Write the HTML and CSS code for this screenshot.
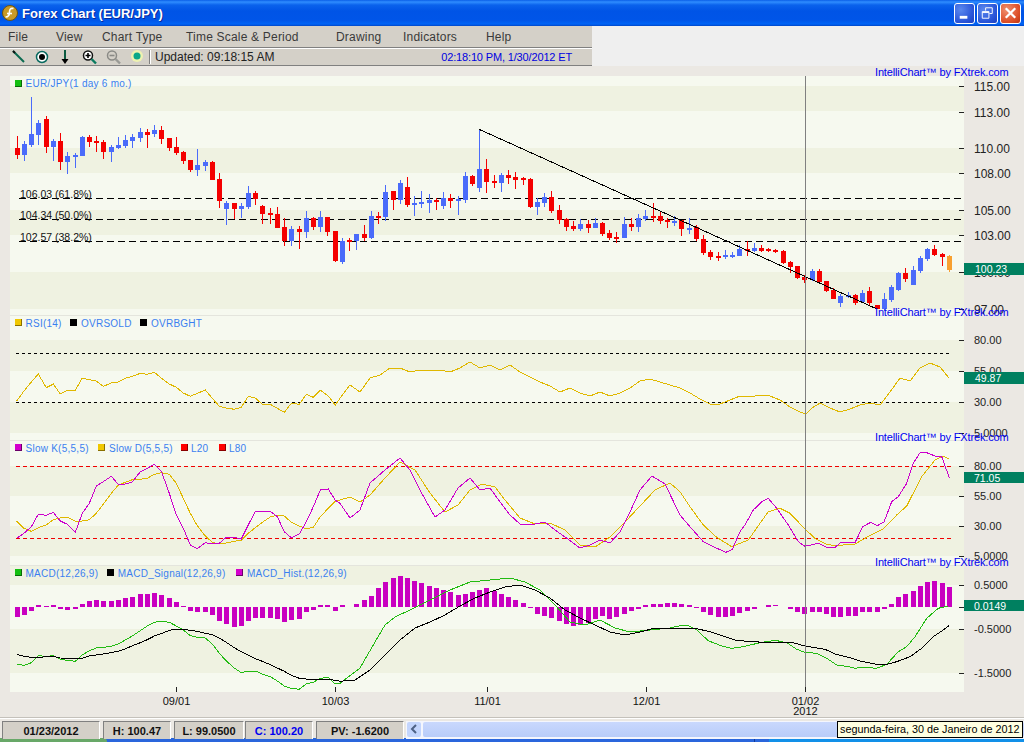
FILE: index.html
```html
<!DOCTYPE html>
<html lang="en">
<head>
<meta charset="utf-8">
<title>Forex Chart (EUR/JPY)</title>
<link rel="stylesheet" href="styles.css">
</head>
<body>
<div class="window">
  <header class="titlebar">
    <svg class="app-icon" width="18" height="18" viewBox="0 0 18 18">
      <circle class="app-icon-disc" cx="9" cy="9" r="7.5"/>
      <path class="app-icon-s" d="M12.5 4.5C9.500 3.800 8.500 5.500 8.500 8S7.500 13 4.500 13"/>
      <path class="app-icon-s" d="M6 9.500H11"/>
    </svg>
    <span class="title">Forex Chart (EUR/JPY)</span>
    <div class="win-buttons">
      <button class="win-btn"><svg width="20" height="20" viewBox="0 0 20 20"><rect class="glyph-fill" x="5" y="13" width="8" height="3"/></svg></button>
      <button class="win-btn"><svg width="20" height="20" viewBox="0 0 20 20"><path class="glyph-line" d="M8 7.500V4.500H15V10.500H12M4.500 8.500H11.500V15.500H4.500ZM4.500 9.500H11.500"/></svg></button>
      <button class="win-btn win-close"><svg width="20" height="20" viewBox="0 0 20 20"><path class="glyph-x" d="M5 5L15 15M15 5L5 15"/></svg></button>
    </div>
  </header>

  <div class="topstrip">
    <div class="bars">
      <nav class="menubar">
        <span class="menu m-file">File</span>
        <span class="menu m-view">View</span>
        <span class="menu m-type">Chart Type</span>
        <span class="menu m-time">Time Scale &amp; Period</span>
        <span class="menu m-draw">Drawing</span>
        <span class="menu m-ind">Indicators</span>
        <span class="menu">Help</span>
      </nav>
      <div class="toolbar">
        <svg class="tools" width="146" height="16" viewBox="0 0 146 16">
          <path class="t-pencil" d="M2 2L13 13"/><path class="t-pencil-tip" d="M2 2L4 4"/>
          <circle class="t-ring" cx="31" cy="8" r="5.500"/><circle class="t-dot" cx="31" cy="8" r="3"/>
          <path class="t-arrow" d="M54 1V11"/><path class="t-head" d="M50.500 10H57.500L54 15Z"/>
          <circle class="t-lens" cx="77" cy="6.500" r="4.500"/><path class="t-plus" d="M74.500 6.500H79.500M77 4V9"/><path class="t-handle" d="M80.500 10L85 14.500"/>
          <circle class="t-lens-off" cx="101" cy="6.500" r="4.500"/><path class="t-minus-off" d="M98.500 6.500H103.500"/><path class="t-handle-off" d="M104.500 10L109 14.500"/>
          <circle class="t-halo" cx="126" cy="7" r="6"/><circle class="t-led" cx="126" cy="7" r="3.500"/>
        </svg>
        <span class="tool-sep"></span>
        <span class="updated">Updated: 09:18:15 AM</span>
        <span class="clock">02:18:10 PM, 1/30/2012 ET</span>
      </div>
    </div>
  </div>

  <div class="chart-area">
    <svg class="chart" width="1024" height="651" viewBox="0 66 1024 651">
      <rect class="band-l" x="10" y="76" width="954" height="616"/>
      <rect class="band-d" x="10" y="86" width="954" height="25"/>
      <rect class="band-d" x="10" y="148" width="954" height="25"/>
      <rect class="band-d" x="10" y="210" width="954" height="25"/>
      <rect class="band-d" x="10" y="272" width="954" height="37"/>
      <rect class="band-d" x="10" y="340" width="954" height="31"/>
      <rect class="band-d" x="10" y="402" width="954" height="31"/>
      <rect class="band-d" x="10" y="466" width="954" height="30"/>
      <rect class="band-d" x="10" y="526" width="954" height="30"/>
      <rect class="band-d" x="10" y="565" width="954" height="20"/>
      <rect class="band-d" x="10" y="629" width="954" height="44"/>
      <rect class="pane-sep" x="10" y="315" width="954" height="1"/>
      <rect class="pane-sep" x="10" y="440" width="954" height="1"/>
      <rect class="pane-sep" x="10" y="565" width="954" height="1"/>

      <path class="dash-main" d="M19 198.500H964M19 219.500H964M19 241.500H964"/>
      <path class="dash-rsi" d="M16 353.500H952M16 402.500H952"/>
      <path class="dash-red" d="M16 466.500H952M16 538.500H952"/>

      <text class="fib" x="20" y="198">106.03 (61.8%)</text>
      <text class="fib" x="20" y="219">104.34 (50.0%)</text>
      <text class="fib" x="20" y="241">102.57 (38.2%)</text>

      <g class="plots"></g>

      <path class="trend" d="M479.500 129.500L877 309"/>
      <path class="cursor" d="M805.500 76V692"/>

      <path class="ticks" d="M959 86.500H964M959 112.500H964M959 148.500H964M959 173.500H964M959 210.500H964M959 235.500H964M959 272.500H964M959 309.500H964M959 340.500H964M959 371.500H964M959 402.500H964M959 433.500H964M959 466.500H964M959 496.500H964M959 526.500H964M959 556.500H964M959 585.500H964M959 607.500H964M959 629.500H964M959 673.500H964M176.500 687V692M335.500 687V692M487.500 687V692M646.500 687V692M805.500 687V692"/>

      <g class="axis">
        <text x="974" y="91">115.00</text>
        <text x="974" y="117">113.00</text>
        <text x="974" y="153">110.00</text>
        <text x="974" y="178">108.00</text>
        <text x="974" y="215">105.00</text>
        <text x="974" y="240">103.00</text>
        <text x="974" y="277">100.00</text>
        <text x="974" y="314">97.00</text>
      </g>
      <g class="axis axis-small">
        <text x="974" y="344">80.00</text>
        <text x="974" y="375">55.00</text>
        <text x="974" y="406">30.00</text>
        <text x="974" y="437">5.0000</text>
        <text x="974" y="470">80.00</text>
        <text x="974" y="500">55.00</text>
        <text x="974" y="530">30.00</text>
        <text x="974" y="560">5.0000</text>
        <text x="974" y="589">0.5000</text>
        <text x="974" y="633">-0.5000</text>
        <text x="974" y="677">-1.5000</text>
      </g>
      <g class="xaxis">
        <text x="176.500" y="705">09/01</text>
        <text x="335.500" y="705">10/03</text>
        <text x="487.500" y="705">11/01</text>
        <text x="646.500" y="705">12/01</text>
        <text x="805.500" y="705">01/02</text>
        <text x="805.500" y="715">2012</text>
      </g>

      <g class="brand">
        <text x="875" y="76">IntelliChart™ by FXtrek.com</text>
        <text x="875" y="316">IntelliChart™ by FXtrek.com</text>
        <text x="875" y="441">IntelliChart™ by FXtrek.com</text>
        <text x="875" y="566">IntelliChart™ by FXtrek.com</text>
      </g>

      <rect class="badge" x="964" y="263" width="60" height="12"/>
      <rect class="badge" x="964" y="372" width="60" height="12"/>
      <rect class="badge" x="964" y="472" width="60" height="11"/>
      <rect class="badge" x="964" y="600" width="60" height="11"/>
      <text class="badge-text" x="975" y="273">100.23</text>
      <text class="badge-text" x="975" y="382">49.87</text>
      <text class="badge-text" x="974" y="482">71.05</text>
      <text class="badge-text" x="974" y="610">0.0149</text>

      <g class="legend">
        <rect class="sw-edge sw-green-e" x="15" y="80" width="7" height="7"/><rect class="sw-green" x="15" y="80" width="6" height="6"/>
        <text x="25.500" y="87">EUR/JPY(1 day 6 mo.)</text>
        <rect class="sw-edge sw-gold-e" x="15" y="319" width="7" height="7"/><rect class="sw-gold" x="15" y="319" width="6" height="6"/>
        <text x="25.500" y="326.500">RSI(14)</text>
        <rect class="sw-black" x="70" y="319" width="7" height="7"/>
        <text x="81" y="326.500">OVRSOLD</text>
        <rect class="sw-black" x="140" y="319" width="7" height="7"/>
        <text x="151" y="326.500">OVRBGHT</text>
        <rect class="sw-edge sw-pur-e" x="15" y="444" width="7" height="7"/><rect class="sw-pur" x="15" y="444" width="6" height="6"/>
        <text x="25.500" y="451.500">Slow K(5,5,5)</text>
        <rect class="sw-edge sw-gold-e" x="98" y="444" width="7" height="7"/><rect class="sw-gold" x="98" y="444" width="6" height="6"/>
        <text x="109" y="451.500">Slow D(5,5,5)</text>
        <rect class="sw-edge sw-red-e" x="181" y="444" width="7" height="7"/><rect class="sw-red" x="181" y="444" width="6" height="6"/>
        <text x="191" y="451.500">L20</text>
        <rect class="sw-edge sw-red-e" x="219" y="444" width="7" height="7"/><rect class="sw-red" x="219" y="444" width="6" height="6"/>
        <text x="229" y="451.500">L80</text>
        <rect class="sw-edge sw-green-e" x="15" y="569" width="7" height="7"/><rect class="sw-green" x="15" y="569" width="6" height="6"/>
        <text x="25.500" y="576.500">MACD(12,26,9)</text>
        <rect class="sw-black" x="107" y="569" width="7" height="7"/>
        <text x="117.700" y="576.500">MACD_Signal(12,26,9)</text>
        <rect class="sw-edge sw-pur-e" x="236" y="569" width="7" height="7"/><rect class="sw-pur" x="236" y="569" width="6" height="6"/>
        <text x="247" y="576.500">MACD_Hist.(12,26,9)</text>
      </g>
    </svg>
  </div>

  <footer class="statusbar">
    <div class="cell c-date">01/23/2012</div>
    <div class="cell c-high">H: 100.47</div>
    <div class="cell c-low">L: 99.0500</div>
    <div class="cell c-close">C: 100.20</div>
    <div class="cell c-pv">PV: -1.6200</div>
    <div class="scroller">
      <span class="scroll-btn"><svg width="14" height="14" viewBox="0 0 14 14"><path class="chevron" d="M9 3L5 7L9 11"/></svg></span>
      <span class="scroll-thumb"></span>
    </div>
    <div class="tooltip">segunda-feira, 30 de Janeiro de 2012</div>
  </footer>

  <div class="taskbar">
    <span class="start"></span>
    <span class="tasks"></span>
    <span class="tray"></span>
  </div>
</div>
<script src="chart.js"></script>
</body>
</html>
```

FILE: styles.css
```css
* { box-sizing: border-box; }
html, body { margin: 0; padding: 0; height: 100%; overflow: hidden; }
body { font-family: "Liberation Sans", Arial, sans-serif; background: #ebe8e3; }
.window { width: 1024px; height: 742px; display: flex; flex-direction: column; overflow: hidden; }

.titlebar {
  height: 26px; flex: none; display: flex; align-items: center; padding: 0 3px 0 1px;
  background: linear-gradient(#0a5fe8 0, #2f8dff 2px, #0a62ec 5px, #0054e6 11px, #0055e8 20px, #0064f6 24px, #0047c8 26px);
}
.app-icon { flex: none; }
.app-icon-disc { fill: #c99a26; stroke: #6b5312; stroke-width: 1; }
.app-icon-s { fill: none; stroke: #fff; stroke-width: 1.6; }
.title { margin-left: 3px; color: #fff; font-weight: 700; font-size: 13px; text-shadow: 1px 1px 0 #0a2a9a; }
.win-buttons { margin-left: auto; display: flex; gap: 2px; }
.win-btn {
  width: 21px; height: 21px; padding: 0; border: 1px solid #fff; border-radius: 3px; display: flex; align-items: center; justify-content: center;
  background: radial-gradient(circle at 30% 30%, #5a88ee, #2a55d8 65%, #1c3fc0);
}
.win-close { background: radial-gradient(circle at 30% 30%, #f09070, #dd4f28 65%, #bb3311); }
.glyph-fill { fill: #fff; }
.glyph-line { fill: none; stroke: #fff; stroke-width: 1; }
.glyph-x { fill: none; stroke: #fff; stroke-width: 2.4; }

.topstrip { height: 40px; flex: none; background: #efefef; }
.bars { width: 592px; background: #d4d0c8; height: 40px; }
.menubar { height: 22px; display: flex; align-items: center; padding-left: 8px; border-bottom: 1px solid #808080; font-size: 12px; letter-spacing: 0.2px; color: #3a3a3a; }
.menu { display: block; }
.m-file { width: 48px; }
.m-view { width: 46px; }
.m-type { width: 84px; }
.m-time { width: 150px; }
.m-draw { width: 67px; }
.m-ind { width: 83px; }
.toolbar { height: 18px; display: flex; align-items: center; border-top: 1px solid #fff; border-bottom: 1px solid #808080; box-shadow: 0 1px 0 #fff; font-size: 12px; color: #222; padding-left: 11px; }
.tools { flex: none; margin-right: -8px; }
.tool-sep { flex: none; width: 2px; height: 14px; border-left: 1px solid #808080; border-right: 1px solid #fff; }
.updated { margin-left: 4px; }
.clock { margin-left: auto; margin-right: 20px; font-size: 11px; letter-spacing: -0.15px; color: #0000e0; }

.t-pencil { stroke: #0a6a50; stroke-width: 2; fill: none; }
.t-pencil-tip { stroke: #111; stroke-width: 2; fill: none; }
.t-ring { fill: #fff; stroke: #0a6a60; stroke-width: 1.5; }
.t-dot { fill: #000; }
.t-arrow { stroke: #0a5a40; stroke-width: 2; fill: none; }
.t-head { fill: #000; }
.t-lens { fill: #fff; stroke: #111; stroke-width: 1.5; }
.t-plus { stroke: #000; stroke-width: 1.6; fill: none; }
.t-handle { stroke: #0a7a60; stroke-width: 2.4; fill: none; }
.t-lens-off { fill: none; stroke: #8a8a86; stroke-width: 1.5; }
.t-minus-off { stroke: #8a8a86; stroke-width: 1.6; fill: none; }
.t-handle-off { stroke: #9a9a96; stroke-width: 2.4; fill: none; }
.t-halo { fill: #eef2b0; }
.t-led { fill: #0aa888; }

.chart-area { flex: none; height: 651px; background: #ebe8e3; }
.chart { display: block; }
.band-l { fill: #f6f9ef; }
.band-d { fill: #eff2e1; }
.pane-sep { fill: #e4e5dd; }
.dash-main { stroke: #000; fill: none; stroke-dasharray: 7 4; shape-rendering: crispEdges; }
.dash-rsi { stroke: #000; fill: none; stroke-dasharray: 3 3; shape-rendering: crispEdges; }
.dash-red { stroke: #f00000; fill: none; stroke-dasharray: 4 3; shape-rendering: crispEdges; }
.fib { font-size: 10.5px; fill: #111; }
.trend { stroke: #000; fill: none; shape-rendering: crispEdges; }
.cursor { stroke: #808080; fill: none; shape-rendering: crispEdges; }
.ticks { stroke: #222; fill: none; shape-rendering: crispEdges; }
.axis text { font-size: 12px; fill: #222; }
.axis-small text { font-size: 11px; }
.xaxis text { font-size: 11px; fill: #111; text-anchor: middle; }
.brand text { font-size: 11px; fill: #0000f0; letter-spacing: -0.15px; }
.badge { fill: #008060; }
.badge-text { font-size: 10.5px; fill: #fff; }
.legend text { font-size: 10px; fill: #3a7ff0; letter-spacing: 0.25px; }
.sw-green { fill: #14c010; } .sw-green-e { fill: #0a6a08; }
.sw-gold { fill: #f0c800; } .sw-gold-e { fill: #8a7000; }
.sw-pur { fill: #d400cc; } .sw-pur-e { fill: #6a0068; }
.sw-red { fill: #ff0000; } .sw-red-e { fill: #8a0000; }
.sw-black { fill: #000; }

.wick-r, .wick-b, .wick-o { fill: none; stroke-width: 1; shape-rendering: crispEdges; }
.body-r, .body-b, .body-o { fill: none; stroke-width: 5; shape-rendering: crispEdges; }
.wick-r, .body-r { stroke: #f40000; }
.wick-b, .body-b { stroke: #4a6bfa; }
.wick-o, .body-o { stroke: #f8a030; }
.hist { fill: none; stroke: #c800c0; stroke-width: 5; shape-rendering: crispEdges; }
.line { fill: none; stroke-width: 1; shape-rendering: crispEdges; }
.l-rsi, .l-d { stroke: #e0b800; }
.l-k { stroke: #cc00cc; }
.l-macd { stroke: #22bb11; }
.l-signal { stroke: #000; }

.statusbar { position: relative; flex: none; height: 21px; display: flex; padding: 3px 0 0 2px; background: #ebe8e3; border-top: 1px solid #c4c1bb; box-shadow: inset 0 1px 0 #fff; }
.cell {
  height: 18px; display: flex; align-items: center; justify-content: center; margin-right: 3px;
  background: #d4d0c8; border-top: 1px solid #808080; border-left: 1px solid #808080; border-right: 1px solid #fff;
  font-size: 11px; font-weight: 700; color: #111;
}
.c-date { width: 98px; }
.c-high { width: 68px; }
.c-low { width: 70px; margin-right: 1px; }
.c-close { width: 68px; color: #0000f0; }
.c-pv { width: 88px; margin-right: 2px; }
.scroller { flex: 1; height: 18px; display: flex; padding: 1px 0 0 1px; background: #f4f6fd; gap: 2px; }
.scroll-btn { width: 14px; height: 15px; background: #c3d5fd; border-radius: 2px; display: flex; }
.chevron { fill: none; stroke: #4d6185; stroke-width: 2; }
.scroll-thumb { flex: 1; height: 15px; background: linear-gradient(#c9d8fd, #b8ccf9); border-radius: 2px; }
.tooltip { position: absolute; left: 837px; top: 3px; width: 186px; height: 17px; padding-left: 2px; background: #ffffe1; border: 1px solid #000; font-size: 10.8px; line-height: 15px; color: #000; white-space: nowrap; overflow: hidden; }

.taskbar { flex: 1; display: flex; background: #2a66dc; }
.start { width: 107px; background: #68a868; border-radius: 0 4px 0 0; }
.tasks { width: 648px; background: #2a66dc; border-right: 1px solid #123a9a; }
.tray { flex: 1; margin-left: 14px; background: #1290e8; }
```

FILE: chart.js
```js
(function () {
  var NS = "http://www.w3.org/2000/svg";
  var plots = document.querySelector(".plots");

  function add(d, cls) {
    var p = document.createElementNS(NS, "path");
    p.setAttribute("d", d);
    p.setAttribute("class", cls);
    plots.appendChild(p);
  }
  function colX(i) { return Math.floor(17.3 + 7.225 * i) + 0.5; }

  // candles as "colour high top bottom low", in 3x units over a base y
  function row(base, s) {
    return s.split(",").map(function (r) {
      var p = r.trim().split(" ");
      return { c: p[0], h: base + p[1] / 3, t: base + p[2] / 3, b: base + p[3] / 3, l: base + p[4] / 3 };
    });
  }
  var candles = [].concat(
    row(90, "r 138 174 194 207,b 153 162 195 212,b 21 132 165 171,b 90 99 135 165,r 78 87 171 189,b 147 153 171 213,r 129 153 216 240,b 186 198 216 252,b 189 195 201 234,b 138 141 198 198,r 135 141 156 171,r 138 153 159 186,r 150 156 186 207,b 165 171 186 216,b 141 165 174 177,b 135 150 168 174,b 132 141 153 174,b 114 126 144 156,r 117 126 135 174,b 105 120 132 141,r 108 120 147 162,r 144 144 174 183,r 141 171 189 195,r 183 186 213 222,r 210 210 240 246,b 177 225 240 258,b 210 216 228 243,r 213 216 270 270,r 249 267 333 354,b 333 339 357 405,r 339 339 357 387,b 339 348 357 384,b 288 309 351 357,r 303 309 327 345,r 345 348 372 402,r 354 369 375 402,r 351 372 414 414,r 384 411 453 468,b 408 417 453 468,r 408 417 426 477,b 363 384 426 444,r 381 384 411 420,b 363 381 411 426,r 381 381 426 438,r 423 423 513 516"),
    row(120, "b 354 363 426 432,r 354 361 364 393,b 342 342 363 390,r 315 342 354 363,b 273 288 354 357,r 276 288 291 312,b 195 216 291 303,r 213 213 240 270,b 180 189 240 252,r 171 201 255 261,b 228 249 255 288,b 213 246 252 264,b 222 240 249 279,r 234 240 246 270,b 216 234 258 267,r 222 234 243 264,b 228 237 243 285,b 156 168 240 249,r 165 168 192 198,b 28 147 204 216,r 117 147 186 219,r 165 183 189 204,b 159 165 189 216,r 150 165 174 192,r 156 171 180 207,r 171 175 180 195,r 174 177 261 264,b 234 246 261 285,b 219 231 249 261,r 213 231 273 279,r 255 270 300 312,r 294 297 321 333,r 303 318 327 333,b 297 312 327 333,r 300 312 324 339,b 294 309 324 324,r 306 309 342 348,r 330 339 354 360,r 336 350 352 369,b 291 312 354 354,r 294 312 321 333,b 282 294 321 336,b 270 288 297 303,r 249 288 290 306,r 273 288 303 312,r 294 300 306 324,b 288 303 305 318"),
    row(210, "r 30 30 57 78,b 24 54 56 72,r 45 51 87 93,r 75 87 129 135,r 120 126 141 150,r 126 138 141 153,b 120 135 141 147,b 126 135 138 144,b 105 117 138 138,r 93 117 123 138,b 99 114 123 126,r 105 114 123 126,r 114 118 120 126,r 117 120 126 129,r 120 123 159 162,r 153 156 171 189,r 168 168 204 207,r 195 201 210 219,b 177 183 210 213,r 177 183 216 219,r 213 213 243 246,r 234 240 267 267,b 252 258 279 291,b 246 255 261 264,r 252 255 279 285,b 240 249 276 279,r 231 243 279 285,r 285 285 297 297,b 249 267 297 300,b 225 231 270 276,b 186 189 240 243,r 174 189 207 216,b 168 180 225 225,b 138 144 183 189,b 114 117 147 153,r 105 117 135 138,r 129 132 141 168,o 135 138 180 186")
  );

  var wick = { r: "", b: "", o: "" };
  var body = { r: "", b: "", o: "" };
  candles.forEach(function (k, i) {
    var x = colX(i);
    var top = Math.round(k.t);
    var bot = Math.max(Math.round(k.b), top + 2);
    wick[k.c] += "M" + x + " " + Math.round(k.h) + "V" + Math.round(k.l);
    body[k.c] += "M" + x + " " + top + "V" + bot;
  });
  ["b", "r", "o"].forEach(function (c) {
    add(wick[c], "wick-" + c);
    add(body[c], "body-" + c);
  });

  // MACD histogram: [top, bottom]
  function pairs(base, list) {
    return list.map(function (p) { return [base + p[0] / 3, base + p[1] / 3]; });
  }
  var hist = [].concat(
    pairs(560, [[141,171],[141,165],[141,153],[135,141],[138,141],[135,141],[141,147],[141,150],[141,147],[132,141],[123,141],[120,141],[123,141],[123,141],[120,141],[114,141],[111,141],[102,141],[102,141],[99,141],[105,141],[114,141],[126,141],[138,141],[141,153],[141,156],[141,156],[141,165],[141,183],[141,192],[141,201],[141,198],[141,183],[141,174],[141,174],[141,174],[141,177],[141,186],[141,180],[141,177],[141,156],[141,150],[135,141],[135,141],[141,153]]),
    pairs(0, [[1815,1821],[1821,1821],[1812,1821],[1800,1821],[1788,1821],[1764,1821],[1746,1821],[1734,1821],[1728,1821],[1734,1821],[1743,1821],[1749,1821],[1758,1821],[1764,1821],[1770,1821],[1776,1821],[1785,1821],[1782,1821],[1776,1821],[1770,1821],[1764,1821],[1773,1821],[1782,1821],[1791,1821],[1800,1821],[1809,1821],[1821,1824],[1821,1842],[1821,1848],[1821,1854],[1821,1863],[1821,1872],[1821,1878],[1821,1875],[1821,1869],[1821,1857],[1821,1848],[1821,1857],[1821,1851],[1821,1842],[1821,1833],[1821,1827],[1815,1821],[1812,1821],[1812,1821],[1809,1821],[1809,1821]]),
    pairs(430, [[522,531],[526,531],[531,534],[531,546],[531,555],[531,561],[531,561],[531,558],[531,549],[531,543],[531,537],[531,531],[526,530],[525,529],[531,531],[531,537],[531,546],[531,552],[531,546],[531,546],[531,552],[531,561],[531,561],[531,558],[531,558],[531,546],[531,546],[531,546],[531,537],[522,531],[501,531],[492,531],[483,531],[468,531],[456,531],[453,531],[459,531],[471,531]])
  );
  var h = "";
  hist.forEach(function (p, i) {
    if (p[1] - p[0] < 0.5) return;
    h += "M" + colX(i) + " " + Math.round(p[0]) + "V" + Math.round(p[1]);
  });
  add(h, "hist");

  // polylines: segments in 3x zoom units with an origin, or plain pixels
  function z(ox, oy, pts) {
    return pts.map(function (p) { return [ox + p[0] / 3, oy + p[1] / 3]; });
  }
  function line(pts, cls) {
    add("M" + pts.map(function (p) { return p[0].toFixed(1) + " " + p[1].toFixed(1); }).join("L"), "line " + cls);
  }

  line([].concat(
    z(0, 310, [[50,273],[72,243],[94,216],[115,192],[139,233],[160,222],[181,252],[202,241],[226,241],[247,204],[268,209],[289,213],[310,229],[334,219],[355,216],[376,205],[397,199],[421,190],[442,193],[463,187],[484,204],[508,222],[529,232],[550,249],[571,259],[592,250],[616,240],[637,265],[658,289],[679,294],[703,298],[724,292],[745,259],[766,264],[787,283],[811,283],[832,295],[853,307],[874,280],[898,283],[919,253],[940,262],[961,240],[985,258],[1006,285],[1020,265]]),
    [[350,385],[360,392],[370,378],[380,375],[390,368],[400,368],[410,372],[420,370],[430,371],[440,370],[450,372],[460,368],[470,362],[480,368],[490,365],[500,370],[510,365],[520,372],[530,377],[540,382],[550,386],[560,392],[570,388],[580,393],[590,396],[600,392],[610,396],[620,393],[630,388],[640,381],[650,379],[660,382],[670,385],[680,388],[690,393],[700,399],[710,404],[720,404],[730,400],[740,396],[750,397],[760,395],[770,396],[780,400],[790,407],[800,412],[806,414],[812,408],[820,403],[830,408],[840,412],[850,409],[860,405],[870,403],[880,405],[890,392],[900,378],[910,381],[920,368],[930,363],[940,367],[949,378]]
  ), "l-rsi");

  line([].concat(
    z(0, 435, [[50,258],[72,280],[94,289],[115,278],[139,270],[160,254],[181,249],[202,246],[226,259],[247,258],[268,254],[289,235],[310,207],[334,175],[355,150],[376,142],[397,134],[421,133],[442,130],[463,118],[484,113],[508,118],[529,145],[550,190],[571,235],[592,272],[616,303],[637,322],[658,327],[679,324],[703,319],[724,316],[745,295],[766,278],[787,262],[811,246],[832,240],[853,243],[874,262],[898,273],[919,282],[940,277],[961,245],[985,220],[1006,198],[1020,195]]),
    [[350,497],[360,502],[370,495],[385,478],[400,462],[415,470],[430,493],[445,512],[458,505],[470,490],[482,484],[495,487],[505,500],[520,518],[535,524],[550,523],[565,530],[580,545],[595,547],[610,537],[625,522],[640,506],[655,490],[670,483]],
    z(680, 430, [[0,185],[30,230],[70,285],[110,322],[155,350],[205,330],[240,280],[265,245],[300,235],[330,250],[375,297],[405,325],[440,343],[465,347],[525,342],[560,322],[612,295],[650,255],[680,228],[725,140],[765,90],[790,78],[808,88]])
  ), "l-d");

  line([].concat(
    z(0, 435, [[50,310],[72,295],[94,275],[115,238],[139,241],[160,232],[181,258],[202,268],[226,292],[247,235],[268,205],[289,153],[310,140],[334,124],[355,148],[376,147],[397,141],[421,110],[442,100],[463,88],[484,108],[508,175],[529,240],[550,280],[571,330],[592,341],[616,323],[637,327],[658,325],[679,307],[703,307],[724,312],[745,270],[766,229],[787,229],[811,229],[832,245],[853,290],[874,308],[898,297],[919,260],[940,215],[961,165],[985,162],[1006,196],[1020,205]]),
    [[350,518],[360,510],[370,483],[385,470],[400,458],[410,470],[420,490],[435,517],[445,510],[458,488],[470,478],[480,490],[490,488],[500,502],[510,515],[520,524],[530,525],[545,522],[555,530],[565,537],[580,548],[590,545],[600,540],[610,543],[620,532],[630,512],[640,490],[652,476],[665,484]],
    z(680, 430, [[0,255],[30,290],[70,335],[100,350],[138,367],[157,358],[180,305],[195,285],[220,240],[245,215],[265,205],[290,235],[325,285],[355,335],[375,349],[415,340],[440,352],[465,352],[482,338],[525,338],[548,290],[572,277],[592,287],[612,276],[635,215],[655,200],[680,160],[700,100],[720,68],[740,68],[765,78],[785,80],[808,143]])
  ), "l-k");

  line([].concat(
    z(0, 560, [[50,313],[72,316],[94,308],[115,287],[139,289],[160,287],[181,298],[202,301],[226,304],[247,285],[268,272],[289,264],[310,262],[334,259],[355,252],[376,240],[397,228],[421,212],[442,198],[463,187],[484,184],[508,187],[529,198],[550,210],[571,227],[592,232],[616,234],[637,252],[658,280],[679,303],[703,324],[724,338],[745,333],[766,333],[787,342],[811,350],[832,363],[853,378],[874,385],[898,388],[919,372],[940,367],[961,355],[985,352],[1006,372],[1020,370]]),
    [[360,668],[375,642],[385,625],[395,617],[410,610],[430,600],[450,590],[470,582],[490,580],[510,578],[525,582],[540,590],[555,605],[570,622],[585,625],[600,620],[615,628],[630,632],[650,630],[670,628]],
    z(680, 430, [[0,587],[25,587],[50,600],[85,632],[125,648],[155,655],[190,650],[240,638],[285,631],[320,638],[350,658],[375,667],[410,670],[440,685],[470,705],[500,709],[525,715],[550,712],[590,715],[620,703],[655,665],[680,650],[705,620],[740,565],[775,535],[805,528]])
  ), "l-macd");

  line([].concat(
    z(0, 560, [[50,283],[72,289],[94,292],[115,292],[160,289],[181,294],[202,295],[247,295],[268,288],[310,282],[355,274],[376,267],[397,257],[421,248],[442,239],[463,228],[484,221],[508,211],[529,208],[550,208],[571,211],[592,214],[616,220],[637,224],[658,234],[679,247],[703,263],[724,275],[745,285],[766,296],[787,304],[811,314],[832,324],[853,334],[874,346],[898,355],[919,357],[940,360],[961,358],[985,358],[1006,361],[1020,364]]),
    [[355,680],[370,670],[385,655],[400,640],[415,628],[430,622],[445,615],[460,606],[475,598],[490,592],[505,587],[520,585],[535,590],[550,598],[565,610],[580,618],[595,625],[610,632],[625,635],[640,632],[655,628],[670,628]],
    z(680, 430, [[0,595],[45,595],[90,605],[140,622],[165,630],[210,635],[260,637],[335,637],[375,648],[435,658],[465,672],[510,683],[540,693],[590,703],[620,703],[650,695],[690,680],[725,655],[760,620],[790,600],[808,586]])
  ), "l-signal");
})();
```
